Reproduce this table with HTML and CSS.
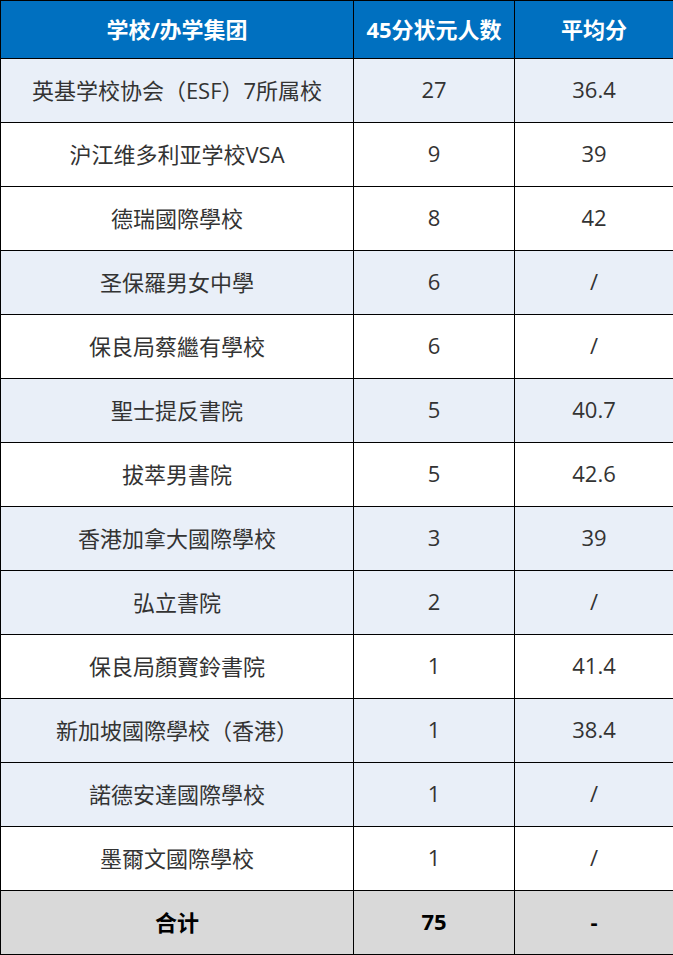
FILE: index.html
```html
<!DOCTYPE html>
<html lang="zh">
<head>
<meta charset="utf-8">
<title>45分状元</title>
<link rel="stylesheet" href="styles.css">
</head>
<body>
<table class="tbl">
  <colgroup><col class="c1"><col class="c2"><col class="c3"></colgroup>
  <thead>
    <tr class="head"><th>学校/办学集团</th><th>45分状元人数</th><th>平均分</th></tr>
  </thead>
  <tbody>
    <tr class="alt"><td>英基学校协会（ESF）7所属校</td><td>27</td><td>36.4</td></tr>
    <tr><td>沪江维多利亚学校VSA</td><td>9</td><td>39</td></tr>
    <tr><td>德瑞國際學校</td><td>8</td><td>42</td></tr>
    <tr class="alt"><td>圣保羅男女中學</td><td>6</td><td>/</td></tr>
    <tr><td>保良局蔡繼有學校</td><td>6</td><td>/</td></tr>
    <tr class="alt"><td>聖士提反書院</td><td>5</td><td>40.7</td></tr>
    <tr><td>拔萃男書院</td><td>5</td><td>42.6</td></tr>
    <tr class="alt"><td>香港加拿大國際學校</td><td>3</td><td>39</td></tr>
    <tr class="alt"><td>弘立書院</td><td>2</td><td>/</td></tr>
    <tr><td>保良局顏寶鈴書院</td><td>1</td><td>41.4</td></tr>
    <tr class="alt"><td>新加坡國際學校（香港）</td><td>1</td><td>38.4</td></tr>
    <tr class="alt"><td>諾德安達國際學校</td><td>1</td><td>/</td></tr>
    <tr><td>墨爾文國際學校</td><td>1</td><td>/</td></tr>
    <tr class="total"><td>合计</td><td>75</td><td>-</td></tr>
  </tbody>
</table>
</body>
</html>
```

FILE: styles.css
```css
html, body {
  margin: 0;
  padding: 0;
  background: #ffffff;
}
.tbl {
  width: 673px;
  border-collapse: collapse;
  table-layout: fixed;
  font-family: "Open Sans", "Noto Sans CJK SC", sans-serif;
  font-size: 22px;
  color: #333333;
}
.c1 { width: 353px; }
.c2 { width: 161px; }
.c3 { width: 159px; }
.tbl th, .tbl td {
  border: 1px solid #000000;
  text-align: center;
  vertical-align: middle;
  padding: 0 0 3px 0;
}
.head th {
  height: 54px;
  background: #0070c0;
  color: #ffffff;
  font-weight: 700;
}
.tbl tbody td {
  height: 60px;
}
.alt td {
  background: #e9eff8;
}
.total td {
  background: #d9d9d9;
  color: #000000;
  font-weight: 700;
}
```
